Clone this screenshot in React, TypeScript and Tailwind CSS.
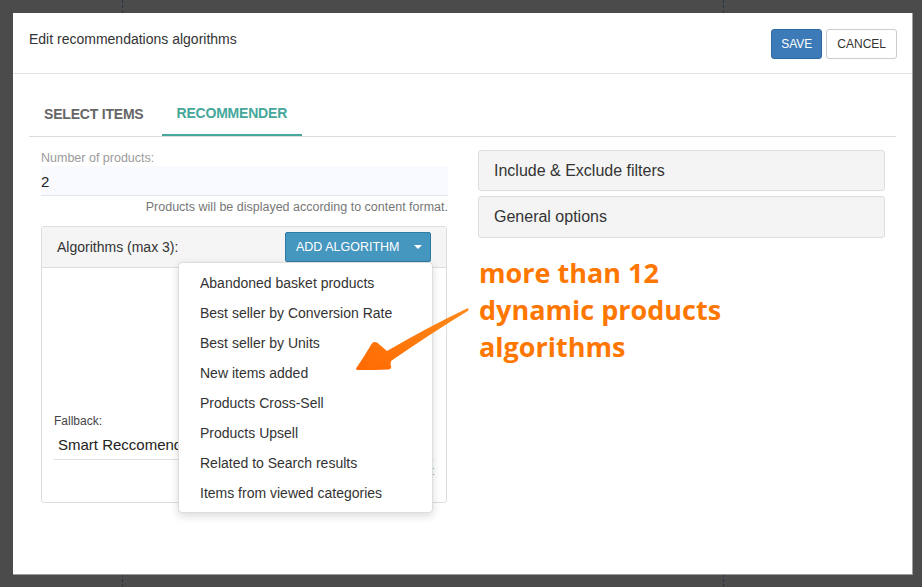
import React from "react";

const items = [
  "Abandoned basket products",
  "Best seller by Conversion Rate",
  "Best seller by Units",
  "New items added",
  "Products Cross-Sell",
  "Products Upsell",
  "Related to Search results",
  "Items from viewed categories",
];

export default function App() {
  return (
    <div
      className="relative w-[922px] h-[587px] overflow-hidden bg-[#4b4b4b] pl-[13px] pt-[13px]"
      style={{ fontFamily: '"Liberation Sans", Arial, sans-serif' }}
    >
      {/* background guide lines */}
      <div className="absolute left-[122px] top-0 h-full border-l border-dashed border-[#2a3547]" />
      <div className="absolute left-[723px] top-0 h-full border-l border-dashed border-[#2a3547]" />

      <div className="relative z-10 w-[900px] h-[562px] bg-white border-r border-b border-[#9c9c9c] flex flex-col">
        {/* header */}
        <div className="h-[61px] shrink-0 border-b border-[#e3e3e3] flex justify-between items-start pl-4 pr-[15px] pt-4">
          <div className="text-[14px] text-[#333] leading-[18px] mt-[1px]">Edit recommendations algorithms</div>
          <div className="flex gap-[4px]">
            <button className="h-[30px] px-[9px] ml-[1px] bg-[#3d7ab8] border border-[#2f6aa5] rounded-[3px] text-white text-[12px]">
              SAVE
            </button>
            <button className="h-[30px] px-[10px] bg-white border border-[#cccccc] rounded-[3px] text-[#333] text-[12px]">
              CANCEL
            </button>
          </div>
        </div>

        {/* tabs */}
        <div className="mx-4 mt-[14px] flex border-b border-[#dddddd]">
          <div className="h-[48px] pt-[5px] px-[15px] flex items-center text-[14px] font-bold text-[#666] tracking-[-0.2px]">
            SELECT ITEMS
          </div>
          <div className="h-[48px] pt-[5px] ml-[3px] px-[15px] flex items-center text-[14px] font-bold text-[#45a89b] tracking-[-0.2px] border-b-2 border-[#45a89b] -mb-px">
            RECOMMENDER
          </div>
        </div>

        {/* content */}
        <div className="px-[28px] grid grid-cols-[407px_407px] gap-[30px]">
          {/* left */}
          <div className="pt-[13px]">
            <div className="text-[12.5px] leading-[16px] text-[#9a9a9a]">Number of products:</div>
            <div className="h-[30px] pt-[3px] bg-[#f8fafd] border-b border-[#e1e6ee] flex items-center text-[15px] text-[#222]">2</div>
            <div className="text-right text-[12.5px] leading-[14px] mt-[4px] text-[#777]">
              Products will be displayed according to content format.
            </div>

            <div className="relative mt-[12px] w-[406px] border border-[#dddddd] rounded-[3px]">
              <div className="h-[41px] bg-[#f5f5f5] border-b border-[#dddddd] flex items-center justify-between pl-[15px] pr-[15px]">
                <span className="text-[14px] text-[#333]">Algorithms (max 3):</span>
                <button className="h-[30px] w-[146px] whitespace-nowrap bg-[#4697bf] border border-[#2f7aa3] rounded-[2px] flex items-center pl-[10px] text-white text-[12.5px]">
                  <span>ADD ALGORITHM</span>
                  <span className="ml-[14px] w-0 h-0 border-l-[4px] border-r-[4px] border-t-[4px] border-l-transparent border-r-transparent border-t-white" />
                </button>
              </div>
              <div className="h-[234px] flex flex-col justify-end px-[12px] pb-[24px]">
                <div className="text-[12px] leading-[16px] text-[#444]">Fallback:</div>
                <div className="h-[31px] border-b border-[#e1e1e1] flex items-center pl-[4px] text-[15px] text-[#222] pt-[3px]">
                  Smart Reccomendations
                </div>
                <div className="text-right text-[12.5px] leading-[14px] mt-[4px] text-[#777]">
                  Used as default content
                </div>
              </div>

              {/* dropdown */}
              <div className="absolute left-[136px] top-[35px] w-[255px] bg-white border border-[#dddddd] rounded-[4px] shadow-[0_3px_8px_rgba(0,0,0,0.15)] pt-[5px] pb-[4px] z-20">
                {items.map((t) => (
                  <div key={t} className="h-[30px] flex items-center pl-[21px] text-[14px] text-[#333]">
                    {t}
                  </div>
                ))}
              </div>
            </div>
          </div>

          {/* right */}
          <div className="pt-[13px]">
            <div className="h-[41px] bg-[#f4f4f4] border border-[#dddddd] rounded-[3px] flex items-center pl-[15px] text-[16px] text-[#333]">
              Include &amp; Exclude filters
            </div>
            <div className="mt-[5px] h-[42px] bg-[#f4f4f4] border border-[#dddddd] rounded-[3px] flex items-center pl-[15px] text-[16px] text-[#333]">
              General options
            </div>
            <div
              className="mt-[16px] ml-[1px] text-[27px] leading-[37px] font-bold text-[#ff7700]"
              style={{ fontFamily: '"Open Sans", sans-serif' }}
            >
              more than 12
              <br />
              dynamic products
              <br />
              algorithms
            </div>
          </div>
        </div>
      </div>

      {/* annotation arrow */}
      <svg className="absolute left-0 top-0 z-30" width="922" height="587" viewBox="0 0 922 587">
        <defs>
          <linearGradient id="ag" x1="0" y1="1" x2="1" y2="0">
            <stop offset="0" stopColor="#ff6a00" />
            <stop offset="1" stopColor="#ff8a1a" />
          </linearGradient>
        </defs>
        <path
          d="M468 308 Q 430 326 387 351 L 377 342.5 Q 373 341 371.5 344 Q 364 357 356 368.5 Q 356 370 358 370 Q 373 370 389 369.5 Q 392.5 368 390.5 364.5 L 391 361 Q 430 334 468.5 310.5 Z"
          fill="url(#ag)"
        />
      </svg>
    </div>
  );
}
